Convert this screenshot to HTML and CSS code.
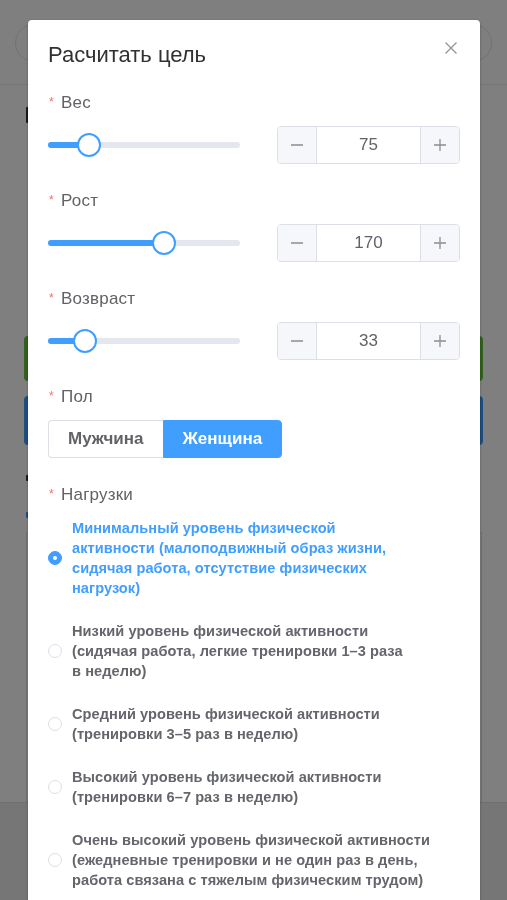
FILE: index.html
```html
<!DOCTYPE html>
<html lang="ru">
<head>
<meta charset="utf-8">
<title>Расчитать цель</title>
<link rel="stylesheet" href="styles.css">
</head>
<body>
<div class="page">
  <header class="page-header"><div class="search"></div></header>
  <main class="page-main">
    <div class="bg-mark bg-mark-title"></div>
    <div class="btn-green"></div>
    <div class="btn-blue"></div>
    <div class="bg-mark bg-mark-dark"></div>
    <div class="bg-mark bg-mark-blue"></div>
    <div class="card"></div>
  </main>
  <footer class="page-footer"></footer>
</div>

<div class="overlay">
  <div class="dialog">
    <div class="dialog-header">
      <h1 class="dialog-title">Расчитать цель</h1>
      <svg class="dialog-close" viewBox="0 0 12 12" width="12" height="12"><path d="M0.5 0.5 L11.5 11.5 M11.5 0.5 L0.5 11.5" stroke="#909399" stroke-width="1.3" fill="none"/></svg>
    </div>

    <div class="form-item">
      <div class="form-label"><span class="req">*</span><span>Вес</span></div>
      <div class="form-row">
        <div class="slider"><div class="slider-fill" style="width:21.6%"></div><div class="slider-thumb" style="left:21.6%"></div></div>
        <div class="num">
          <div class="num-btn num-minus"><svg viewBox="0 0 14 14" width="14" height="14"><path d="M1 7 H13" stroke="#8a8d93" stroke-width="1.3"/></svg></div>
          <div class="num-value">75</div>
          <div class="num-btn num-plus"><svg viewBox="0 0 14 14" width="14" height="14"><path d="M1 7 H13 M7 1 V13" stroke="#8a8d93" stroke-width="1.3"/></svg></div>
        </div>
      </div>
    </div>

    <div class="form-item">
      <div class="form-label"><span class="req">*</span><span>Рост</span></div>
      <div class="form-row">
        <div class="slider"><div class="slider-fill" style="width:60.3%"></div><div class="slider-thumb" style="left:60.3%"></div></div>
        <div class="num">
          <div class="num-btn num-minus"><svg viewBox="0 0 14 14" width="14" height="14"><path d="M1 7 H13" stroke="#8a8d93" stroke-width="1.3"/></svg></div>
          <div class="num-value">170</div>
          <div class="num-btn num-plus"><svg viewBox="0 0 14 14" width="14" height="14"><path d="M1 7 H13 M7 1 V13" stroke="#8a8d93" stroke-width="1.3"/></svg></div>
        </div>
      </div>
    </div>

    <div class="form-item">
      <div class="form-label"><span class="req">*</span><span>Возвраст</span></div>
      <div class="form-row">
        <div class="slider"><div class="slider-fill" style="width:19.5%"></div><div class="slider-thumb" style="left:19.5%"></div></div>
        <div class="num">
          <div class="num-btn num-minus"><svg viewBox="0 0 14 14" width="14" height="14"><path d="M1 7 H13" stroke="#8a8d93" stroke-width="1.3"/></svg></div>
          <div class="num-value">33</div>
          <div class="num-btn num-plus"><svg viewBox="0 0 14 14" width="14" height="14"><path d="M1 7 H13 M7 1 V13" stroke="#8a8d93" stroke-width="1.3"/></svg></div>
        </div>
      </div>
    </div>

    <div class="form-item">
      <div class="form-label"><span class="req">*</span><span>Пол</span></div>
      <div class="seg">
        <div class="seg-btn">Мужчина</div>
        <div class="seg-btn seg-active">Женщина</div>
      </div>
    </div>

    <div class="form-item">
      <div class="form-label"><span class="req">*</span><span>Нагрузки</span></div>
      <div class="radio-list">
        <div class="radio radio-checked"><span class="radio-dot"></span><span class="radio-text">Минимальный уровень физической<br>активности (малоподвижный образ жизни,<br>сидячая работа, отсутствие физических<br>нагрузок)</span></div>
        <div class="radio"><span class="radio-dot"></span><span class="radio-text">Низкий уровень физической активности<br>(сидячая работа, легкие тренировки 1–3 раза<br>в неделю)</span></div>
        <div class="radio"><span class="radio-dot"></span><span class="radio-text">Средний уровень физической активности<br>(тренировки 3–5 раз в неделю)</span></div>
        <div class="radio"><span class="radio-dot"></span><span class="radio-text">Высокий уровень физической активности<br>(тренировки 6–7 раз в неделю)</span></div>
        <div class="radio"><span class="radio-dot"></span><span class="radio-text">Очень высокий уровень физической активности<br>(ежедневные тренировки и не один раз в день,<br>работа связана с тяжелым физическим трудом)</span></div>
      </div>
    </div>
  </div>
</div>
</body>
</html>
```

FILE: styles.css
```css
* { box-sizing: border-box; }
html, body { margin: 0; padding: 0; height: 100%; }
body {
  font-family: "Liberation Sans", Arial, sans-serif;
  background: #fff;
  overflow: hidden;
}

/* background page */
.page { height: 900px; display: flex; flex-direction: column; }
.page-header {
  height: 85px;
  padding: 24px 15px 0;
  border-bottom: 1px solid #ececec;
  background: #fff;
}
.search { height: 38px; border: 1px solid #e2e4ea; border-radius: 19px; }
.page-main {
  padding: 0 24px;
  display: flex;
  flex-direction: column;
  background: #fff;
}
.bg-mark { width: 20px; margin-left: 2px; border-radius: 1px; }
.bg-mark-title { margin-top: 22px; height: 16px; background: #303133; }
.btn-green { margin-top: 213px; height: 45px; background: #67c23a; border-radius: 4px; }
.btn-blue { margin-top: 15px; height: 49px; background: #409eff; border-radius: 4px; }
.bg-mark-dark { margin-top: 30px; height: 6px; background: #303133; }
.bg-mark-blue { margin-top: 31px; height: 6px; background: #409eff; }
.card { margin: 14px 1px 0 2px; height: 270px; border: 1px solid #e6e6e6; background: #fff; }
.page-footer { flex: 1; background: #ececec; border-top: 1px solid #dedede; }

/* overlay + dialog */
.overlay {
  position: fixed;
  inset: 0;
  background: rgba(0, 0, 0, 0.5);
  overflow: hidden;
}
.dialog {
  margin: 20px 0 0 28px;
  width: 452px;
  background: #fff;
  border-radius: 4px;
  padding: 23px 20px 40px;
  box-shadow: 0 1px 3px rgba(0, 0, 0, 0.3);
}
.dialog-header {
  display: flex;
  justify-content: space-between;
  align-items: flex-start;
  margin-bottom: 24px;
}
.dialog-title {
  margin: 0;
  font-size: 22px;
  line-height: 24px;
  font-weight: 400;
  color: #303133;
}
.dialog-close { margin: -1px 3px 0 0; display: block; }

.form-item { margin-bottom: 25px; }
.form-label {
  display: flex;
  align-items: flex-start;
  font-size: 17px;
  line-height: 24px;
  letter-spacing: 0.2px;
  color: #606266;
  margin-bottom: 11px;
}
.req {
  flex: none;
  width: 6px;
  margin: 0 6px 0 1px;
  color: #f56c6c;
  font-size: 12px;
  line-height: 22px;
  overflow: hidden;
}

.form-row {
  height: 38px;
  display: flex;
  align-items: center;
  justify-content: space-between;
}
.slider {
  position: relative;
  width: 192px;
  height: 6px;
  border-radius: 3px;
  background: #e4e7ed;
}
.slider-fill { height: 100%; border-radius: 3px; background: #409eff; }
.slider-thumb {
  position: absolute;
  top: 50%;
  width: 24px;
  height: 24px;
  margin: -12px 0 0 -12px;
  border: 2px solid #409eff;
  border-radius: 50%;
  background: #fff;
}

.num {
  width: 183px;
  height: 38px;
  display: flex;
  border: 1px solid #dcdfe6;
  border-radius: 4px;
  overflow: hidden;
}
.num-btn {
  width: 39px;
  flex: none;
  display: flex;
  align-items: center;
  justify-content: center;
  background: #f5f7fa;
}
.num-btn svg { display: block; }
.num-minus { border-right: 1px solid #dcdfe6; }
.num-plus { border-left: 1px solid #dcdfe6; }
.num-value {
  flex: 1;
  display: flex;
  align-items: center;
  justify-content: center;
  font-size: 17px;
  color: #606266;
}

.seg { display: flex; }
.seg-btn {
  height: 38px;
  padding: 0 19px;
  display: flex;
  align-items: center;
  font-size: 17px;
  font-weight: 700;
  color: #606266;
  border: 1px solid #dcdfe6;
  background: #fff;
}
.seg-btn:first-child { border-radius: 4px 0 0 4px; border-right: none; }
.seg-btn:last-child { border-radius: 0 4px 4px 0; }
.seg-active { background: #409eff; border-color: #409eff; color: #fff; }

.radio-list { display: flex; flex-direction: column; gap: 23px; }
.radio { display: flex; align-items: center; gap: 10px; }
.radio-dot {
  flex: none;
  position: relative;
  width: 14px;
  height: 14px;
  border: 1px solid #dcdfe6;
  border-radius: 50%;
  background: #fff;
}
.radio-checked .radio-dot { background: #409eff; border-color: #409eff; }
.radio-checked .radio-dot::after {
  content: "";
  position: absolute;
  left: 50%;
  top: 50%;
  width: 4px;
  height: 4px;
  margin: -2px 0 0 -2px;
  border-radius: 50%;
  background: #fff;
}
.radio-text {
  font-size: 14.6px;
  line-height: 20px;
  letter-spacing: 0.05px;
  font-weight: 700;
  color: #64666b;
  white-space: nowrap;
}
.radio-checked .radio-text { color: #409eff; }
```
